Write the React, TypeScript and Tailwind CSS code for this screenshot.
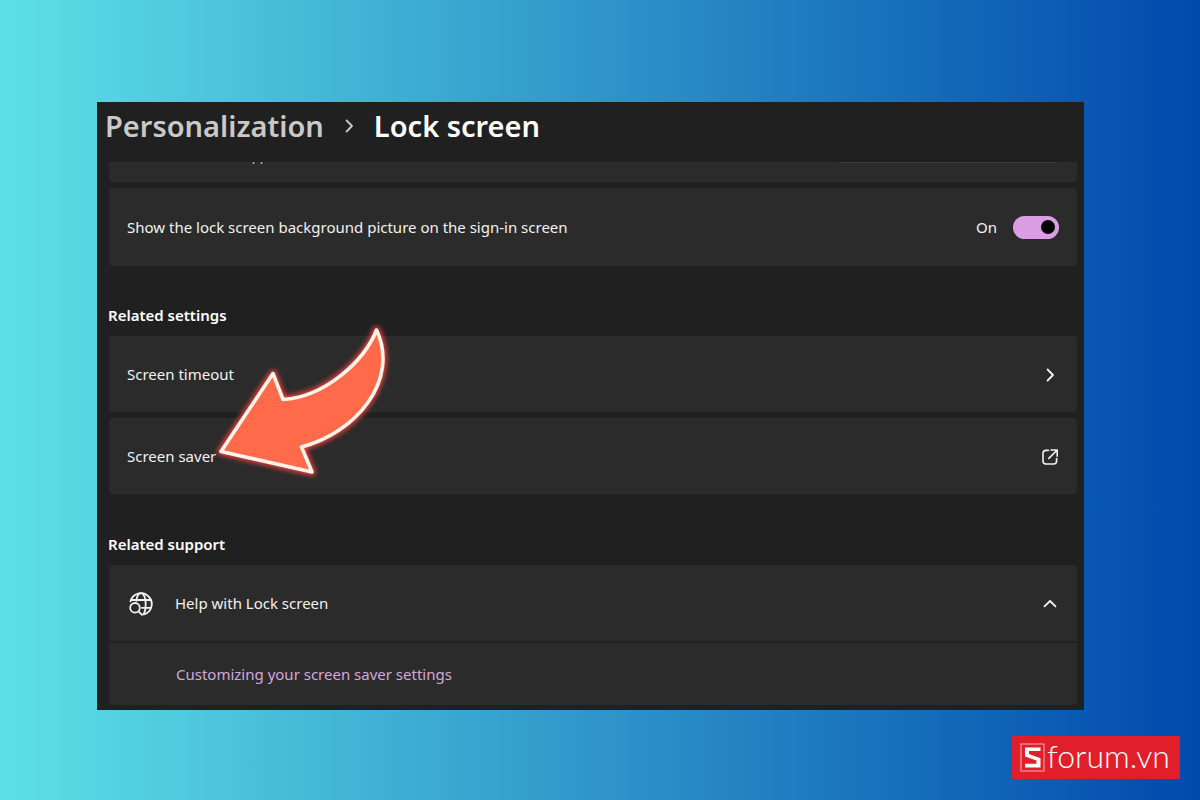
import React from "react";

function Row({ label, children }: { label: string; children: React.ReactNode }) {
  return (
    <button
      type="button"
      className="flex h-[76px] w-full items-center justify-between rounded-[4px] bg-[#2b2b2b] pt-px pr-4 pl-[18px] text-left text-[15px] text-[#f2f2f2]"
    >
      <span>{label}</span>
      {children}
    </button>
  );
}

function ChevronRight({ className }: { className: string }) {
  return (
    <svg viewBox="0 0 22 22" className={className} fill="none" stroke="currentColor" strokeWidth="1.8" strokeLinecap="round" strokeLinejoin="round" aria-hidden="true">
      <path d="M8.6 5.5 L14 11 L8.6 16.5" />
    </svg>
  );
}

function ExternalIcon() {
  return (
    <svg viewBox="0 0 22 22" className="size-[22px]" fill="none" stroke="currentColor" strokeWidth="1.6" strokeLinecap="round" strokeLinejoin="round" aria-hidden="true">
      <path d="M9.4 4.4 H7 a3 3 0 0 0 -3 3 V15 a3 3 0 0 0 3 3 H14.6 a3 3 0 0 0 3 -3 V12.6" />
      <path d="M12 4 H18.200 V10.200 M18 4.200 L9.8 12.400" />
    </svg>
  );
}

function GlobeSearchIcon() {
  return (
    <svg viewBox="0 0 24 24" className="size-6" fill="none" stroke="currentColor" strokeWidth="1.8" strokeLinecap="round" aria-hidden="true">
      <path d="M1.500 9.300 A10.800 10.800 0 1 1 15 22.400" />
      <path d="M2.200 8 H21.800 M13 15.800 H21.800" />
      <path d="M7.400 8.800 C7.900 4.600 9.700 1.200 12 1.200 C14.800 1.200 16.700 6 16.700 12 C16.700 17 15.800 20.600 14.400 22.200" />
      <circle cx="6" cy="15.800" r="4.800" />
      <path d="M9.500 19.300 L13 22.800" />
    </svg>
  );
}

function Arrow() {
  return (
    <svg viewBox="0 0 190 170" className="pointer-events-none absolute top-[214px] left-[113px] h-[170px] w-[190px]" aria-hidden="true">
      <defs>
        <filter id="glow" x="-20%" y="-20%" width="140%" height="140%">
          <feGaussianBlur stdDeviation="2.4" />
        </filter>
        <path id="arrow" d="M166.500 14 C154 46 114 81 73 83.500 L63 57.500 L11 135.500 L102 156 L91.500 131 C146 117 190 64 166.500 14 Z" />
      </defs>
      <use href="#arrow" fill="none" stroke="#f0423c" strokeWidth="7" strokeLinejoin="round" filter="url(#glow)" />
      <use href="#arrow" fill="#ff6b4a" stroke="#fff3ea" strokeWidth="3.6" strokeLinejoin="round" />
    </svg>
  );
}

function SforumLogo() {
  return (
    <a href="#sforum" className="flex h-[43px] w-[168px] items-center gap-[2px] bg-[#e01f2b] pl-2 text-white" aria-label="Sforum.vn">
      <svg viewBox="0 0 25 29" className="h-[29px] w-[25px] shrink-0" fill="none" aria-hidden="true">
        <rect x="1" y="1" width="23" height="27" stroke="#fbd5d6" strokeWidth="0.8" />
        <path d="M20.500 4.500 H5 V13.500 L16.500 17.500 V20.800 H5 V24.500 H20.500 V15.200 L9 11 V8 H20.500 Z" fill="#fff" />
      </svg>
      <span className="pb-1 font-['Lato'] text-[32px] leading-none font-light">forum.vn</span>
    </a>
  );
}

export default function App() {
  return (
    <div className="flex min-h-screen flex-col bg-linear-to-r/srgb from-[#5de0e6] to-[#004aad] pt-[102px] pr-[116px] pl-[97px] font-['Noto_Sans','Open_Sans',sans-serif]">
      <main className="relative bg-[#202020] pr-[7px] pb-[5px] pl-3">
        <nav className="-ml-1 flex h-12 items-center text-[29px] font-semibold" aria-label="Breadcrumb">
          <a href="#personalization" className="text-[#c9c9c9]">Personalization</a>
          <ChevronRight className="mx-[14px] size-[22px] text-[#c9c9c9]" />
          <h1 className="text-white">Lock screen</h1>
        </nav>

        <div className="mt-3 flex h-5 justify-between rounded-b-[4px] bg-[#2b2b2b] pr-5 pl-[143px]">
          <svg viewBox="0 0 14 3" className="h-[3px] w-[14px]" fill="#b5b5b5" aria-hidden="true">
            <circle cx="1.500" cy="1" r="1" />
            <circle cx="9.500" cy="1" r="1" />
          </svg>
          <div className="h-px w-[218px] bg-[#3a3a3a]" />
        </div>

        <label className="mt-[6px] flex h-[78px] items-center rounded-[4px] bg-[#2b2b2b] px-[18px] text-[15px] text-[#f2f2f2]">
          <span className="grow">Show the lock screen background picture on the sign-in screen</span>
          <span>On</span>
          <span className="ml-4 flex items-center">
            <input
              type="checkbox"
              role="switch"
              defaultChecked
              className="flex h-[23px] w-[46px] appearance-none items-center rounded-full bg-[#dc9ee2] px-1 before:size-[14px] before:rounded-full before:bg-black checked:justify-end"
            />
          </span>
        </label>

        <h2 className="mt-[37px] -ml-px flex h-6 items-center text-[15px] font-semibold text-white">Related settings</h2>
        <div className="mt-[9px] flex flex-col gap-[6px]">
          <Row label="Screen timeout">
            <ChevronRight className="size-[22px]" />
          </Row>
          <Row label="Screen saver">
            <ExternalIcon />
          </Row>
        </div>

        <h2 className="mt-[38px] -ml-px flex h-6 items-center text-[15px] font-semibold text-white">Related support</h2>
        <section className="mt-[9px] rounded-[4px] bg-[#2b2b2b] text-[15px]">
          <button type="button" className="flex h-[78px] w-full items-center border-b-2 border-[#212121] pt-px pr-4 pl-5 text-left text-[#f2f2f2]">
            <GlobeSearchIcon />
            <span className="ml-[22px] grow">Help with Lock screen</span>
            <ChevronRight className="size-[22px] -rotate-90" />
          </button>
          <div className="flex h-[62px] items-center pl-[67px]">
            <a href="#screen-saver" className="text-[#d5a8dc]">Customizing your screen saver settings</a>
          </div>
        </section>
        <Arrow />
      </main>
      <footer className="-mr-24 flex justify-end pt-[26px]">
        <SforumLogo />
      </footer>
    </div>
  );
}
